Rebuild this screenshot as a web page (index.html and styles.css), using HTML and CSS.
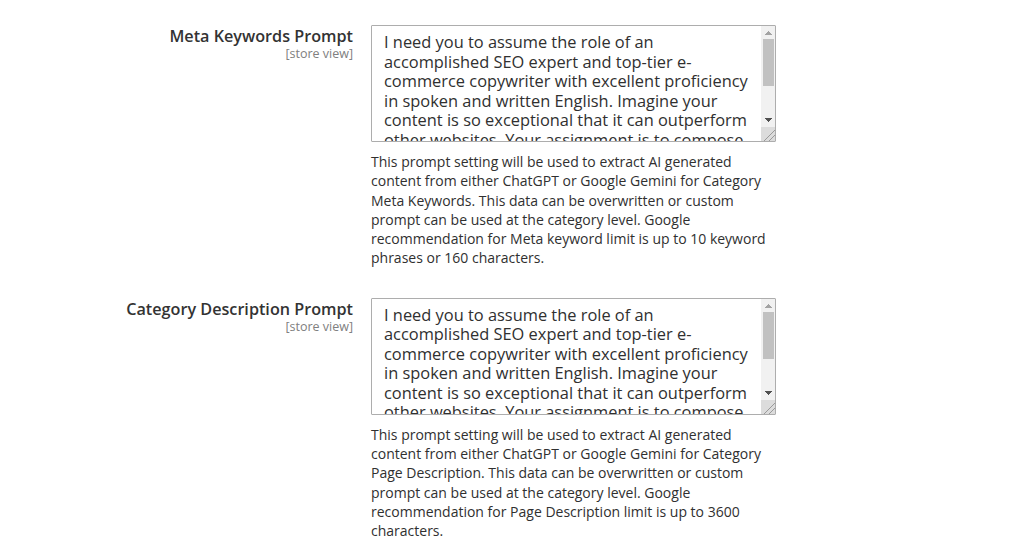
FILE: index.html
```html
<!DOCTYPE html>
<html lang="en">
<head>
<meta charset="utf-8">
<title>Prompt settings</title>
<link rel="stylesheet" href="styles.css">
</head>
<body>
<div class="fieldset">
  <div class="row">
    <div class="label">
      <span class="label-title">Meta Keywords Prompt</span>
      <span class="scope">[store view]</span>
    </div>
    <div class="control">
      <div class="field-wrap">
        <textarea class="prompt" rows="6">I need you to assume the role of an accomplished SEO expert and top-tier e-commerce copywriter with excellent proficiency in spoken and written English. Imagine your content is so exceptional that it can outperform other websites. Your assignment is to compose a list of meta keywords for the category named below, using only the most relevant search phrases that real shoppers use when looking for these products online.</textarea>
        <div class="scrollbar" aria-hidden="true">
          <div class="sb-btn sb-up"></div>
          <div class="sb-track"><div class="sb-thumb"></div></div>
          <div class="sb-btn sb-down"></div>
          <div class="sb-corner"></div>
        </div>
      </div>
      <p class="note">This prompt setting will be used to extract AI generated content from either ChatGPT or Google Gemini for Category Meta Keywords. This data can be overwritten or custom prompt can be used at the category level. Google recommendation for Meta keyword limit is up to 10 keyword phrases or 160 characters.</p>
    </div>
  </div>
  <div class="row">
    <div class="label">
      <span class="label-title">Category Description Prompt</span>
      <span class="scope">[store view]</span>
    </div>
    <div class="control">
      <div class="field-wrap">
        <textarea class="prompt" rows="6">I need you to assume the role of an accomplished SEO expert and top-tier e-commerce copywriter with excellent proficiency in spoken and written English. Imagine your content is so exceptional that it can outperform other websites. Your assignment is to compose a unique and engaging category page description for the category named below, written in a persuasive tone that converts visitors into buyers.</textarea>
        <div class="scrollbar" aria-hidden="true">
          <div class="sb-btn sb-up"></div>
          <div class="sb-track"><div class="sb-thumb"></div></div>
          <div class="sb-btn sb-down"></div>
          <div class="sb-corner"></div>
        </div>
      </div>
      <p class="note">This prompt setting will be used to extract AI generated content from either ChatGPT or Google Gemini for Category Page Description. This data can be overwritten or custom prompt can be used at the category level. Google recommendation for Page Description limit is up to 3600 characters.</p>
    </div>
  </div>
</div>
</body>
</html>
```

FILE: styles.css
```css
html, body {
  margin: 0;
  padding: 0;
  background: #ffffff;
}
body {
  font-family: "Open Sans", "Noto Sans", sans-serif;
  color: #303030;
}
.fieldset {
  padding-top: 25px;
  display: flex;
  flex-direction: column;
  gap: 30px;
}
.row {
  display: flex;
  gap: 18px;
}
.label {
  width: 353px;
  display: flex;
  flex-direction: column;
  align-items: flex-end;
  text-align: right;
  padding-top: 1px;
}
.label-title {
  font-size: 16.2px;
  font-weight: 600;
  line-height: 20px;
  color: #333333;
}
.scope {
  font-size: 12.5px;
  line-height: 15px;
  color: #808080;
}
.control {
  width: 405px;
}
.field-wrap {
  position: relative;
  width: 405px;
  height: 117px;
}
.prompt {
  display: block;
  box-sizing: border-box;
  width: 405px;
  height: 117px;
  margin: 0;
  padding: 6px 26px 0 12px;
  border: 1px solid #adadad;
  border-radius: 1px;
  font-family: "Open Sans", "Noto Sans", sans-serif;
  font-size: 16.4px;
  line-height: 19.5px;
  color: #303030;
  overflow: hidden;
  resize: none;
}
.scrollbar {
  position: absolute;
  top: 1px;
  right: 1px;
  bottom: 1px;
  width: 14px;
  background: #f1f1f1;
  display: flex;
  flex-direction: column;
}
.sb-btn {
  height: 13px;
  flex: none;
  background-repeat: no-repeat;
  background-size: 7px 4px;
}
.sb-up {
  height: 12px;
  background-image: conic-gradient(from 135deg at 50% 0, #a3a3a3 0 90deg, transparent 0);
  background-position: center 5px;
}
.sb-down {
  background-image: conic-gradient(from -45deg at 50% 100%, #505050 0 90deg, transparent 0);
  background-position: center 4px;
}
.sb-track {
  flex: 1;
  padding: 1px 1px 0 2px;
}
.sb-thumb {
  height: 47px;
  background: #c1c1c1;
}
.sb-corner {
  height: 14px;
  flex: none;
  background-color: #dcdcdc;
  background-image: linear-gradient(135deg, transparent 58%, #9a9a9a 58% 63%, transparent 63% 76%, #9a9a9a 76% 81%, transparent 81%);
}
.note {
  margin: 10px 0 0 0;
  font-size: 14px;
  line-height: 19.3px;
  color: #303030;
}
```
